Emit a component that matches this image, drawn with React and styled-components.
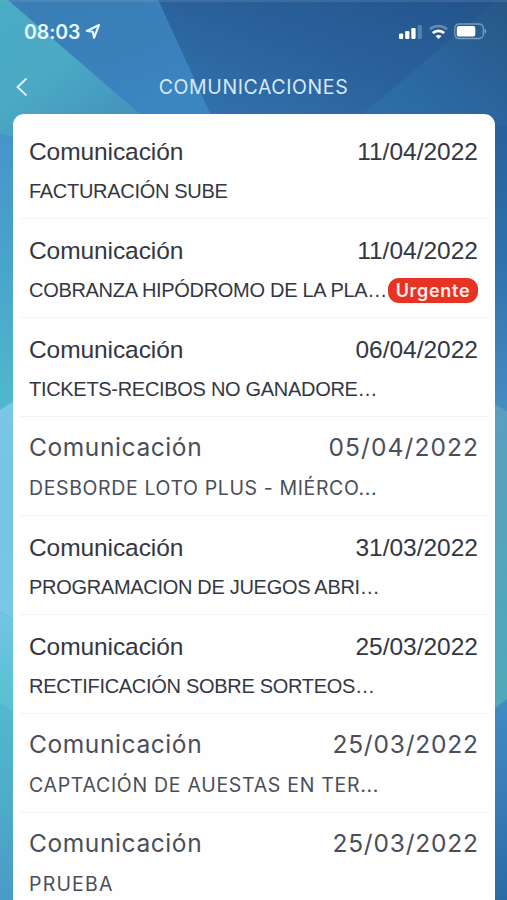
import React from "react";
import styled, { createGlobalStyle, css } from "styled-components";

const GlobalStyle = createGlobalStyle`
  * { box-sizing: border-box; }
  html, body { margin: 0; padding: 0; }
  body { overflow: hidden; }
`;

const Screen = styled.main`
  position: relative;
  isolation: isolate;
  display: flex;
  flex-direction: column;
  width: 507px;
  height: 900px;
  overflow: hidden;
  background: #3a7db5;
  color: #343742;
  font-family: "Liberation Sans", Arial, sans-serif;
`;

const Backdrop = styled.svg`
  position: absolute;
  inset: 0;
  z-index: -1;
`;

const StatusBar = styled.header`
  display: flex;
  align-items: center;
  justify-content: space-between;
  height: 62px;
  padding: 1px 20px 0 24px;
  color: #e9f7ff;
`;

const Clock = styled.div`
  display: flex;
  align-items: center;
  gap: 5px;
  font: 600 19.5px/24px Inter, sans-serif;
  letter-spacing: -0.1px;
`;

const Indicators = styled.div`
  display: flex;
  align-items: center;
  gap: 6px;
`;

const NavBar = styled.nav`
  display: grid;
  grid-template-columns: 44px 1fr 44px;
  align-items: center;
  height: 52px;
  padding-bottom: 3px;
  color: #e2f2ff;
`;

const BackButton = styled.button`
  display: flex;
  padding: 0 0 0 16px;
  border: 0;
  background: none;
  color: inherit;
`;

const Heading = styled.h1`
  margin: 0;
  text-align: center;
  color: #d5e9fa;
  font: 400 19.5px/24px Inter, sans-serif;
  letter-spacing: 0.6px;
`;

const Card = styled.section`
  flex: 1;
  min-height: 0;
  margin: 0 12px 0 13px;
  padding: 6px 7px 0;
  overflow: hidden;
  background: #fefefe;
  border-radius: 11px 11px 0 0;
`;

const List = styled.ul`
  margin: 0;
  padding: 0;
  list-style: none;
`;

const readFont = css`
  padding-top: 15px;
  font-family: Inter, sans-serif;
  font-weight: 400;
  color: #4b4e59;
`;

const Row = styled.li`
  height: 99px;
  padding: 17px 10px 0 9px;
  border-bottom: 1px solid #f3f3f4;
  ${(p) => p.$read && readFont}
`;

const Line = styled.div`
  display: flex;
  align-items: center;
  justify-content: space-between;
  white-space: nowrap;
`;

const Title = styled.span`
  font-size: 24.5px;
  line-height: 30px;
  letter-spacing: ${(p) => (p.$read ? 0.6 : -0.08)}px;
`;

const DateText = styled.time`
  font-size: 24.5px;
  line-height: 30px;
  letter-spacing: ${(p) => p.$spacing ?? 0}px;
  margin-right: ${(p) => -(p.$spacing ?? 0)}px;
`;

const Subject = styled.span`
  margin-top: ${(p) => (p.$read ? 12 : 10)}px;
  font-size: ${(p) => (p.$read ? 19.5 : 20)}px;
  line-height: 28px;
  letter-spacing: ${(p) => p.$spacing ?? -0.3}px;
`;

const Badge = styled.span`
  margin-top: 10px;
  width: 90px;
  height: 25px;
  border-radius: 11px;
  background: #e63323;
  color: #ffece8;
  font: 600 18px/25px Inter, sans-serif;
  letter-spacing: 0.7px;
  text-align: center;
`;

const messages = [
  { date: "11/04/2022", subject: "FACTURACIÓN SUBE" },
  { date: "11/04/2022", subject: "COBRANZA HIPÓDROMO DE LA PLA…", urgent: true },
  { date: "06/04/2022", subject: "TICKETS-RECIBOS NO GANADORE…" },
  { date: "05/04/2022", subject: "DESBORDE LOTO PLUS - MIÉRCO...", spacing: 0.62, read: true, dateSpacing: 1.1 },
  { date: "31/03/2022", subject: "PROGRAMACION DE JUEGOS ABRI…" },
  { date: "25/03/2022", subject: "RECTIFICACIÓN SOBRE SORTEOS…" },
  { date: "25/03/2022", subject: "CAPTACIÓN DE AUESTAS EN TER...", spacing: 0.7, read: true, dateSpacing: 0.8 },
  { date: "25/03/2022", subject: "PRUEBA", spacing: 1.2, read: true, dateSpacing: 0.8 },
];

const gradients = [
  { id: "teal", x2: 0.8, y2: 1, stops: ["#4bacc5", "#4ba9c3", "#4291bf"] },
  { id: "azure", x2: 0.6, y2: 1, stops: ["#397fb5", "#3a80ba", "#3b86c2"] },
  { id: "navy", x1: 1, x2: 0, y2: 1, stops: ["#23538b", "#2a629c", "#3576b1"] },
  { id: "steel", x1: 1, x2: 0, y2: 1, stops: ["#265786", "#2b669e", "#2d72aa"] },
  { id: "leftUpper", x2: 0, y2: 1, stops: ["#4695ca", "#49a5ca", "#51b9cc"] },
  { id: "leftSky", x2: 0, y2: 1, stops: ["#7bc7e3", "#74c4e2", "#7bc8e4"] },
  { id: "leftMist", x2: 0, y2: 1, stops: ["#72c7e1", "#62c2d9", "#59c0cf"] },
  { id: "leftLower", x2: 0, y2: 1, stops: ["#52b9cd", "#4eacc9", "#499bc8"] },
  { id: "rightUpper", x2: 0, y2: 1, stops: ["#28609a", "#3173ad", "#478dc1"] },
  { id: "rightMiddle", x2: 0, y2: 1, stops: ["#5c9dc0", "#55a5bb", "#4fa9b9"] },
  { id: "rightLower", x2: 0, y2: 1, stops: ["#428bc3", "#387cb6", "#2b6ba4"] },
];

const facets = [
  ["steel", "490,0 507,0 507,126 350,126"],
  ["navy", "158,0 497,0 362,115 362,126 210,126 210,115"],
  ["azure", "8,0 158,0 211,115 211,126 140,126 140,115"],
  ["teal", "0,0 8,0 141,115 40,126 14,137 0,134"],
  ["leftUpper", "0,134 14,137 14,402 0,411"],
  ["leftSky", "0,410 14,401 14,620 0,612"],
  ["leftMist", "0,612 14,620 14,713 0,704"],
  ["leftLower", "0,703 14,712 14,900 0,900"],
  ["rightUpper", "494,126 507,126 507,412 494,404"],
  ["rightMiddle", "494,404 507,411 507,700 494,710"],
  ["rightLower", "494,709 507,699 507,900 494,900"],
];

function Facets() {
  return (
    <Backdrop width="507" height="900" viewBox="0 0 507 900" aria-hidden="true">
      <defs>
        {gradients.map(({ id, x1 = 0, x2, y2, stops }) => (
          <linearGradient key={id} id={id} x1={x1} y1="0" x2={x2} y2={y2}>
            {stops.map((color, i) => (
              <stop key={i} offset={i / 2} stopColor={color} />
            ))}
          </linearGradient>
        ))}
      </defs>
      {facets.map(([id, points]) => (
        <polygon key={id} points={points} fill={`url(#${id})`} />
      ))}
      <rect width="507" height="2" fill="#8fa6ba" opacity=".22" />
    </Backdrop>
  );
}

function LocationIcon() {
  return (
    <svg width="16" height="17" viewBox="0 0 16 17" fill="none" stroke="currentColor" strokeWidth="2.1" strokeLinejoin="round">
      <path d="M14 2 1.8 8l6 .7 1.3 6L14 2Z" />
    </svg>
  );
}

function SignalIcon() {
  return (
    <svg width="24" height="16" viewBox="0 0 24 16" fill="#fff">
      <rect x="0" y="9.5" width="4.2" height="5.5" rx="1.2" />
      <rect x="6.2" y="7" width="4.2" height="8" rx="1.2" />
      <rect x="12.3" y="4" width="4.3" height="11" rx="1.2" />
      <rect x="18.6" y="1" width="4.3" height="14" rx="1.2" opacity=".24" />
    </svg>
  );
}

function WifiIcon() {
  return (
    <svg width="19" height="16" viewBox="0 0 19 16" fill="none" stroke="#fff" strokeWidth="2.6">
      <path d="M1 5.3c4.9-4.4 12.1-4.4 17 0" opacity=".3" />
      <path d="M3.8 9c3.2-2.9 8.2-2.9 11.4 0" />
      <path d="M6.5 12.1c1.8-1.6 4.2-1.6 6 0l-3 3Z" fill="#fff" stroke="none" />
    </svg>
  );
}

function BatteryIcon() {
  return (
    <svg width="33" height="17" viewBox="0 0 33 17">
      <rect x=".8" y="1" width="28.5" height="14.5" rx="4.2" fill="none" stroke="#fff" strokeWidth="1.3" opacity=".4" />
      <rect x="2.8" y="3" width="18.5" height="10.5" rx="2" fill="#fff" />
      <path d="M30.6 5.7c2.2.8 2.2 4.3 0 5.1Z" fill="#fff" opacity=".45" />
    </svg>
  );
}

function Message({ item }) {
  return (
    <Row $read={item.read}>
      <Line>
        <Title $read={item.read}>Comunicación</Title>
        <DateText $spacing={item.dateSpacing}>{item.date}</DateText>
      </Line>
      <Line>
        <Subject $read={item.read} $spacing={item.spacing}>{item.subject}</Subject>
        {item.urgent && <Badge>Urgente</Badge>}
      </Line>
    </Row>
  );
}

export default function App() {
  return (
    <Screen>
      <GlobalStyle />
      <Facets />
      <StatusBar>
        <Clock>
          08:03
          <LocationIcon />
        </Clock>
        <Indicators>
          <SignalIcon />
          <WifiIcon />
          <BatteryIcon />
        </Indicators>
      </StatusBar>
      <NavBar>
        <BackButton aria-label="Volver">
          <svg width="12" height="20" viewBox="0 0 12 20" fill="none" stroke="currentColor" strokeWidth="1.8" strokeLinecap="round">
            <path d="M10 2 1.5 10 10 18" />
          </svg>
        </BackButton>
        <Heading>COMUNICACIONES</Heading>
      </NavBar>
      <Card>
        <List>
          {messages.map((item, i) => (
            <Message key={i} item={item} />
          ))}
        </List>
      </Card>
    </Screen>
  );
}
